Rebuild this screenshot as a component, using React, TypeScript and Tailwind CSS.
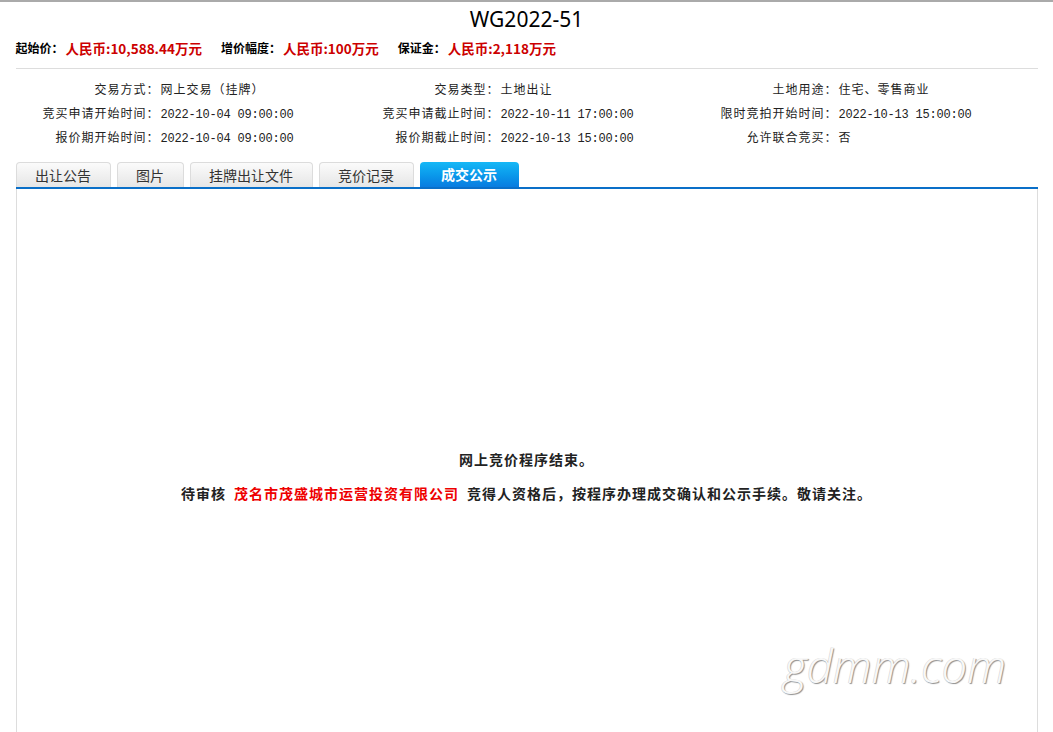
import React from "react";

const cjk = "font-['Noto_Sans_CJK_SC',sans-serif]";

const infoRows: [string, string][][] = [
  [
    ["交易方式：", "网上交易（挂牌）"],
    ["交易类型：", "土地出让"],
    ["土地用途：", "住宅、零售商业"],
  ],
  [
    ["竞买申请开始时间：", "2022-10-04 09:00:00"],
    ["竞买申请截止时间：", "2022-10-11 17:00:00"],
    ["限时竞拍开始时间：", "2022-10-13 15:00:00"],
  ],
  [
    ["报价期开始时间：", "2022-10-04 09:00:00"],
    ["报价期截止时间：", "2022-10-13 15:00:00"],
    ["允许联合竞买：", "否"],
  ],
];

const tabs = [
  { label: "出让公告", width: "w-[95px]" },
  { label: "图片", width: "w-[67px]" },
  { label: "挂牌出让文件", width: "w-[123px]" },
  { label: "竞价记录", width: "w-[95px]" },
  { label: "成交公示", width: "w-[99px]", active: true },
];

export default function App() {
  return (
    <div className={`min-h-[732px] border-t-2 border-[#aaaaaa] bg-white text-[#222] ${cjk}`}>
      <div className="mx-auto w-[1022px]">
        <h1 className="pt-[2px] text-center font-['Noto_Sans',sans-serif] text-[21px] leading-[30px] text-black">
          WG2022-51
        </h1>

        <div className="mt-[4px] flex h-[20px] items-center text-[12px] font-bold text-black">
          <span>起始价：</span>
          <span className="ml-[2px] text-[13.5px] text-[#cc0000]">人民币:10,588.44万元</span>
          <span className="ml-[19px]">增价幅度：</span>
          <span className="ml-[2px] text-[13.5px] text-[#cc0000]">人民币:100万元</span>
          <span className="ml-[19px]">保证金：</span>
          <span className="ml-[2px] text-[13.5px] text-[#cc0000]">人民币:2,118万元</span>
        </div>

        <div className="mt-[10px] border-t border-[#dddddd]" />

        <div className="mt-[8px] text-[12px] leading-[24px] text-[#222]">
          {infoRows.map((row, i) => (
            <div key={i} className="grid h-[24px] grid-cols-[144px_196px_144px_194px_144px_200px] items-baseline">
              {row.map(([label, value]) => (
                <React.Fragment key={label}>
                  <span className="text-right tracking-[1px]">{label}</span>
                  {/^[\d\s:-]+$/.test(value) ? (
                    <span className="pl-[1px] font-['Liberation_Mono',monospace] tracking-[-0.2px]">{value}</span>
                  ) : (
                    <span className="pl-[1px] tracking-[1px]">{value}</span>
                  )}
                </React.Fragment>
              ))}
            </div>
          ))}
        </div>

        <div className="mt-[15px] flex h-[25px] items-end gap-[6px] border-b-2 border-[#0a6fc8]">
          {tabs.map((tab) =>
            tab.active ? (
              <div
                key={tab.label}
                className={`${tab.width} flex h-[25px] items-center justify-center rounded-t-[4px] bg-gradient-to-b from-[#16b8f6] to-[#0a7ce0] text-[14px] font-bold text-white`}
              >
                {tab.label}
              </div>
            ) : (
              <div
                key={tab.label}
                className={`${tab.width} flex h-[25px] items-center justify-center rounded-t-[4px] border border-b-0 border-[#dcdcdc] bg-gradient-to-b from-[#fbfbfb] to-[#e6e6e6] text-[14px] text-[#333]`}
              >
                {tab.label}
              </div>
            )
          )}
        </div>

        <div className="relative min-h-[560px] border-x border-[#dddddd] pt-[259px] text-center text-[14px] font-bold leading-[22px] tracking-[1px] text-[#222]">
          <p>网上竞价程序结束。</p>
          <p className="mt-[12px]">
            待审核
            <span className="mx-[8px] text-[#ee0000]">茂名市茂盛城市运营投资有限公司</span>
            竞得人资格后，按程序办理成交确认和公示手续。敬请关注。
          </p>
          <span className="absolute left-[767px] top-[451px] font-['Open_Sans',sans-serif] text-[45.5px] font-light italic leading-[50px] tracking-normal text-[#f8f8f8] [text-shadow:1px_1px_1px_#8f8f8f,-0.5px_-0.5px_0_#d4d4d4]">
            gdmm.com
          </span>
        </div>
      </div>
    </div>
  );
}
